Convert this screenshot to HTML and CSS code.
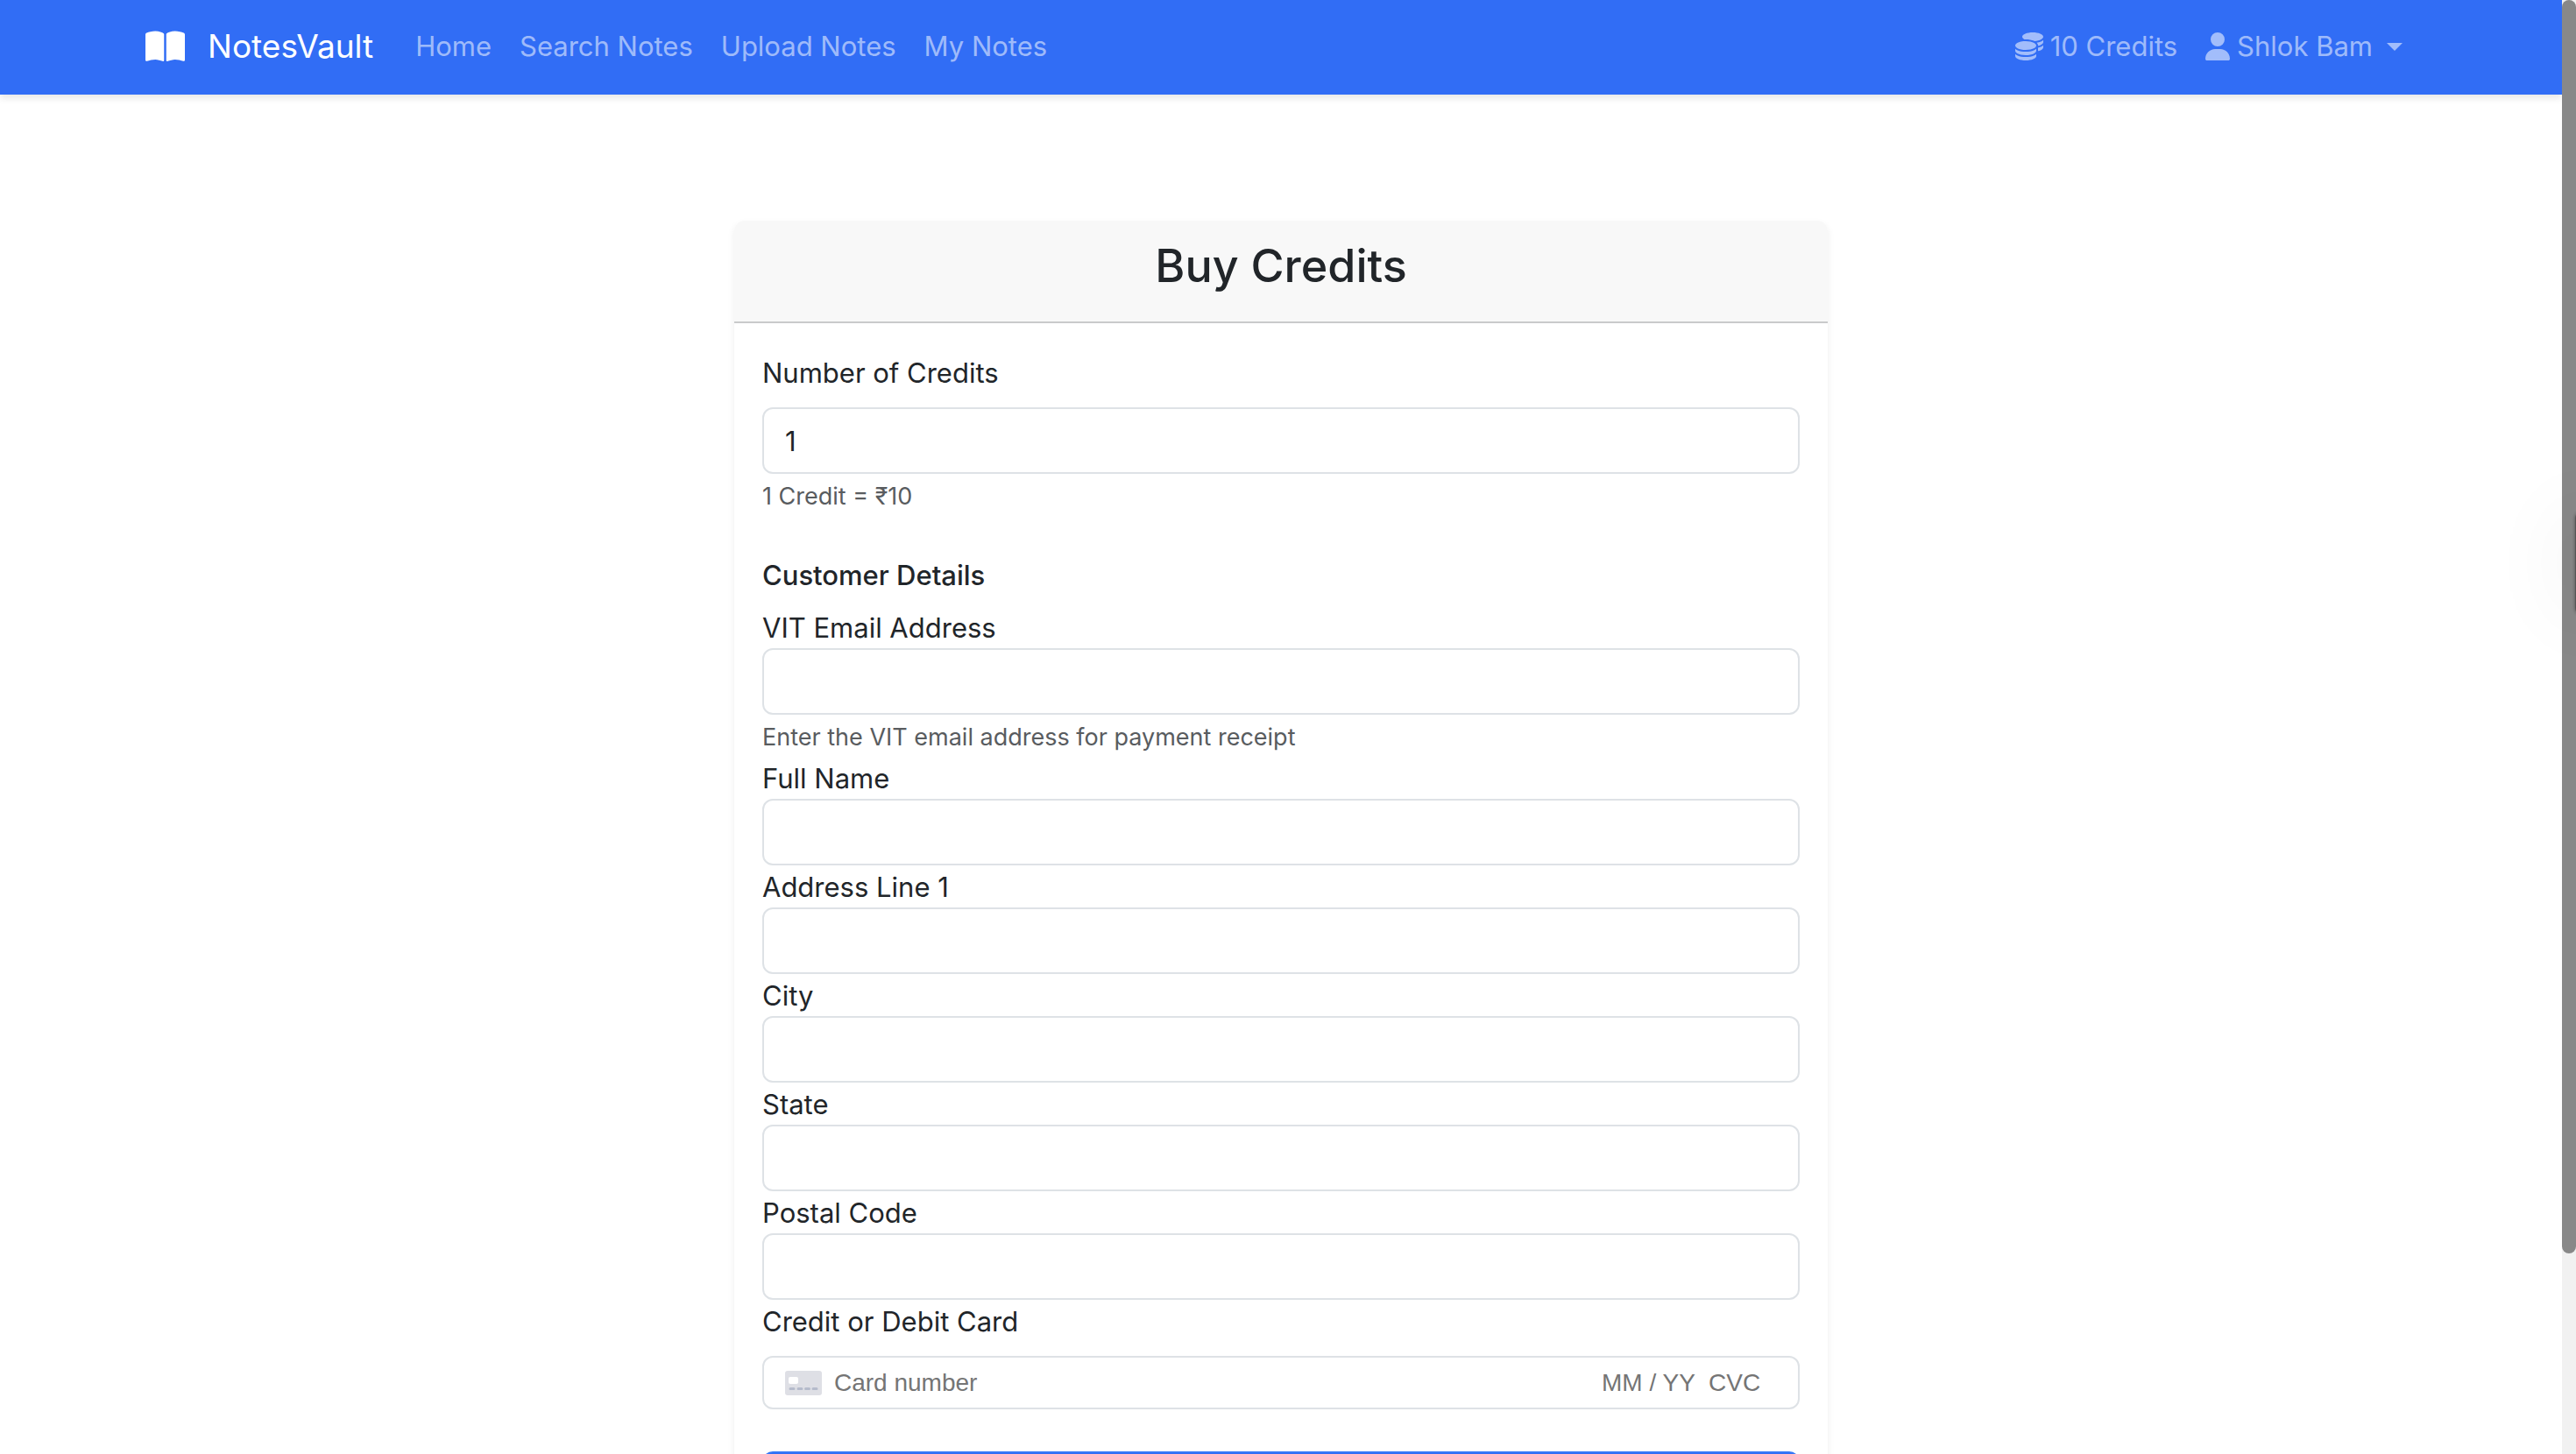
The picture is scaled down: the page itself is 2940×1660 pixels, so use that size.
FILE: index.html
```html
<!DOCTYPE html>
<html lang="en">
<head>
<meta charset="utf-8">
<meta name="viewport" content="width=device-width, initial-scale=1">
<title>Buy Credits - NotesVault</title>
<link rel="stylesheet" href="styles.css">
</head>
<body>
<div class="page">
  <nav class="navbar">
    <div class="container">
      <a class="brand" href="#">
        <svg class="icon-book" viewBox="0 0 576 512" aria-hidden="true"><path fill="currentColor" d="M249.600 471.500c10.800 3.800 22.400-4.100 22.400-15.500V78.600c0-4.200-1.600-8.400-5-11C247.400 52 202.400 32 144 32C93.500 32 46.300 45.300 18.100 56.100C6.800 60.500 0 71.700 0 83.800V454.100c0 11.900 12.800 20.200 24.100 16.500C55.600 460.100 105.500 448 144 448c33.900 0 79 14 105.600 23.500zm76.800 0C353 462 398.100 448 432 448c38.500 0 88.400 12.100 119.900 22.600c11.300 3.800 24.100-4.600 24.100-16.500V83.800c0-12.100-6.800-23.300-18.100-27.600C529.700 45.300 482.500 32 432 32c-58.400 0-103.400 20-123 35.600c-3.300 2.600-5 6.800-5 11V456c0 11.400 11.700 19.300 22.400 15.500z"/></svg>
        <span>NotesVault</span>
      </a>
      <ul class="nav">
        <li><a class="nav-link" href="#">Home</a></li>
        <li><a class="nav-link" href="#">Search Notes</a></li>
        <li><a class="nav-link" href="#">Upload Notes</a></li>
        <li><a class="nav-link" href="#">My Notes</a></li>
      </ul>
      <ul class="nav nav-end">
        <li><a class="nav-link" href="#">
          <svg class="icon-coins" viewBox="0 0 512 512" aria-hidden="true"><path fill="currentColor" d="M512 80c0 18-14.300 34.600-38.400 48c-29.100 16.100-72.500 27.500-122.300 30.900c-3.700-1.800-7.400-3.500-11.300-5C300.600 137.400 248.200 128 192 128c-8.300 0-16.400 .2-24.500 .6l-1.100-.6C142.300 114.600 128 98 128 80c0-44.200 86-80 192-80S512 35.800 512 80zM160.700 161.100c10.200-.7 20.700-1.100 31.300-1.100c62.200 0 117.400 12.300 152.500 31.400C369.300 204.900 384 221.700 384 240c0 4-.7 7.900-2.100 11.700c-4.600 13.200-17 25.300-35 35.500c0 0 0 0 0 0c-.1 .1-.3 .1-.4 .2c-.3 .2-.6 .3-.9 .5c-35 19.400-90.800 32-153.600 32c-59.600 0-112.900-11.300-148.200-29.100c-1.900-.9-3.700-1.900-5.500-2.900C14.300 274.600 0 258 0 240c0-34.800 53.400-64.500 128-75.400c10.500-1.500 21.400-2.700 32.700-3.500zM416 240c0-21.900-10.600-39.900-24.100-53.400c28.300-4.400 54.200-11.400 76.200-20.500c16.300-6.800 31.500-15.200 43.900-25.500V176c0 19.300-16.500 37.100-43.800 50.900c-14.600 7.400-32.400 13.700-52.400 18.500c.1-1.800 .2-3.500 .2-5.300zm-32 96c0 18-14.300 34.600-38.400 48c-1.800 1-3.600 1.900-5.500 2.900C304.900 404.700 251.600 416 192 416c-62.800 0-118.600-12.600-153.600-32C14.300 370.600 0 354 0 336V300.600c12.500 10.300 27.600 18.700 43.900 25.500C83.400 342.600 135.800 352 192 352s108.600-9.400 148.100-25.900c7.800-3.200 15.300-6.900 22.400-10.900c6.100-3.400 11.800-7.200 17.200-11.200c1.500-1.100 2.900-2.300 4.300-3.400V304v5.700V336zm32 0V304 278.100c19-4.200 36.500-9.500 52.100-16c16.300-6.800 31.500-15.200 43.900-25.500V272c0 10.500-5 21-14.900 30.900c-16.300 16.300-45 29.700-81.300 38.400c.1-1.700 .2-3.500 .2-5.300zM192 448c56.200 0 108.600-9.400 148.100-25.900c16.300-6.800 31.500-15.200 43.900-25.500V432c0 44.200-86 80-192 80S0 476.200 0 432V396.600c12.500 10.300 27.600 18.700 43.900 25.500C83.400 438.600 135.800 448 192 448z"/></svg>
          <span>10 Credits</span>
        </a></li>
        <li><a class="nav-link" href="#" aria-haspopup="true">
          <svg class="icon-user" viewBox="0 0 448 512" aria-hidden="true"><path fill="currentColor" d="M224 256A128 128 0 1 0 224 0a128 128 0 1 0 0 256zm-45.700 48C79.800 304 0 383.800 0 482.300C0 498.700 13.300 512 29.700 512H418.300c16.400 0 29.700-13.300 29.700-29.700C448 383.800 368.200 304 269.700 304H178.300z"/></svg>
          <span>Shlok Bam</span>
          <span class="caret"></span>
        </a></li>
      </ul>
    </div>
  </nav>

  <main class="main">
    <section class="card">
      <header class="card-header"><h1 class="title">Buy Credits</h1></header>
      <form class="card-body">
        <div class="field field-spaced">
          <label class="label" for="credits">Number of Credits</label>
          <input class="input" id="credits" type="text" inputmode="numeric" value="1">
          <small class="hint">1 Credit = ₹10</small>
        </div>
        <h2 class="subtitle">Customer Details</h2>
        <div class="field">
          <label class="label" for="email">VIT Email Address</label>
          <input class="input" id="email" type="email">
          <small class="hint">Enter the VIT email address for payment receipt</small>
        </div>
        <div class="field">
          <label class="label" for="name">Full Name</label>
          <input class="input" id="name" type="text">
        </div>
        <div class="field">
          <label class="label" for="address">Address Line 1</label>
          <input class="input" id="address" type="text">
        </div>
        <div class="field">
          <label class="label" for="city">City</label>
          <input class="input" id="city" type="text">
        </div>
        <div class="field">
          <label class="label" for="state">State</label>
          <input class="input" id="state" type="text">
        </div>
        <div class="field">
          <label class="label" for="postal">Postal Code</label>
          <input class="input" id="postal" type="text">
        </div>
        <div class="field field-spaced">
          <label class="label" for="card-number">Credit or Debit Card</label>
          <div class="card-input">
            <svg class="icon-card" viewBox="0 0 42 28" aria-hidden="true"><rect width="42" height="28" rx="3" fill="#dedfe5"/><rect x="4" y="7" width="11" height="8" rx="2" fill="#fff"/><path d="M6 20.500h4M15 20.500h4M23.500 20.500h4M32 20.500h4" stroke="#b5bbcb" stroke-width="3" stroke-linecap="round"/></svg>
            <input class="card-number" id="card-number" type="text" placeholder="Card number">
            <input class="card-expiry" type="text" placeholder="MM / YY" aria-label="Expiry date">
            <input class="card-cvc" type="text" placeholder="CVC" aria-label="CVC">
          </div>
        </div>
        <button class="submit" type="submit" aria-label="Buy Credits"></button>
      </form>
    </section>
  </main>
</div>
<div class="scrollbar" aria-hidden="true"><div class="scrollbar-thumb"></div></div>
<div class="edge-tab"></div>
</body>
</html>
```
FILE: styles.css
```css
* { box-sizing: border-box; }

body {
  display: grid;
  grid-template-columns: 1fr 16px;
  height: 100vh;
  margin: 0;
  overflow: hidden;
  background: #fff;
  color: #212529;
  font: 400 31px/48px Inter, "Noto Sans", sans-serif;
}

.page {
  min-height: 0;
  overflow-y: auto;
  scrollbar-width: none;
}
.scrollbar { background: #f1f1f1; }
.scrollbar-thumb {
  height: 86.2%;
  border-radius: 8px;
  background: #888;
}

/* Navigation */
.navbar {
  padding: 15px 0 17px;
  background: #316df5;
  box-shadow: 0 4px 8px rgba(0, 0, 0, 0.1);
}
.container {
  display: flex;
  align-items: center;
  max-width: 2640px;
  height: 76px;
  margin: 0 auto;
  padding: 0 24px;
}
.brand {
  display: flex;
  align-items: center;
  gap: 26px;
  margin-right: 32px;
  color: #fff;
  font-size: 37px;
  text-decoration: none;
}
.nav {
  display: flex;
  margin: 0;
  padding: 0;
  list-style: none;
}
.nav-end { margin-left: auto; }
.nav-link {
  display: flex;
  align-items: center;
  gap: 8px;
  padding: 0 16px;
  color: rgba(255, 255, 255, 0.55);
  text-decoration: none;
}
.icon-book { width: 45px; height: 40px; }
.icon-coins { width: 32px; height: 32px; }
.icon-user { width: 28px; height: 32px; }
.caret {
  margin-left: 8px;
  border: 9px solid transparent;
  border-top-color: currentColor;
  border-bottom: 0;
}

/* Purchase form */
.main { padding: 144px 24px 160px; }
.card {
  max-width: 1248px;
  margin: 0 auto;
  border-radius: 12px;
  background: #fff;
  box-shadow: 0 4px 8px rgba(0, 0, 0, 0.075);
}
.card-header {
  padding: 18px 32px 30px;
  border-bottom: 2px solid #c9cacb;
  border-radius: 12px 12px 0 0;
  background: #f8f8f8;
  text-align: center;
}
.title {
  margin: 0;
  font-size: 52px;
  font-weight: 500;
  line-height: 67px;
}
.card-body { padding: 32px; }
.field {
  display: flex;
  flex-direction: column;
}
.label {
  padding-top: 2px;
  line-height: 46px;
}
.field-spaced { margin-bottom: 48px; }
.field-spaced .label { margin-bottom: 16px; }
.input {
  width: 100%;
  height: 76px;
  padding: 12px 24px;
  border: 2px solid #dee2e6;
  border-radius: 12px;
  background: #fff;
  color: inherit;
  font: inherit;
}
.hint {
  padding-top: 4px;
  color: #595c5f;
  font-size: 27px;
  line-height: 44px;
}
.subtitle {
  margin: 0 0 16px;
  font-size: 31px;
  font-weight: 500;
  line-height: 39px;
}
.card-input {
  display: flex;
  align-items: center;
  height: 61px;
  padding: 0 24px;
  border: 2px solid #dee2e6;
  border-radius: 12px;
}
.card-input input {
  padding: 0;
  border: 0;
  background: none;
  color: #212529;
  font: 28px/34px "Liberation Sans", Arial, sans-serif;
}
.card-input input::placeholder { color: #757575; }
.icon-card { width: 42px; height: 28px; }
.card-input .card-number {
  flex: 1;
  min-width: 0;
  margin-left: 14px;
}
.card-input .card-expiry { width: 122px; }
.card-input .card-cvc { width: 78px; }
.submit {
  width: 100%;
  height: 76px;
  border: 2px solid #3478f7;
  border-radius: 12px;
  background: #316df5;
  color: #fff;
  font: inherit;
}

/* Panel tucked behind the right edge of the window */
.edge-tab {
  position: fixed;
  top: 584px;
  right: -23px;
  width: 24px;
  height: 118px;
  border-radius: 8px;
  background: #555;
  box-shadow: 0 0 4px rgba(0, 0, 0, 0.4), 0 0 96px rgba(0, 0, 0, 0.12);
  pointer-events: none;
}
```
